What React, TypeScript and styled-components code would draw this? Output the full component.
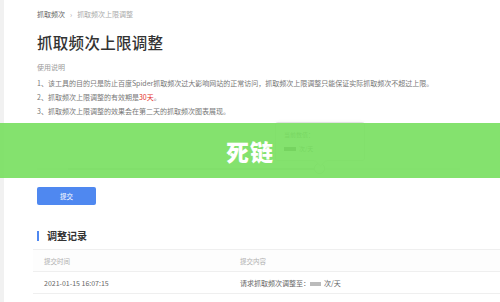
import React from "react";
import styled, { createGlobalStyle } from "styled-components";

const Global = createGlobalStyle`
  html, body { margin: 0; padding: 0; background: #f1f1f1; }
  body { font-family: "Noto Sans CJK SC", "Noto Sans", sans-serif; }
  #root { width: 500px; height: 302px; overflow: hidden; position: relative; }
`;

const Page = styled.div`
  margin-left: 4px;
  height: 302px;
  background: #ffffff;
  padding: 8px 0 0 33px;
  box-sizing: border-box;
  display: flex;
  flex-direction: column;
`;

const Crumbs = styled.div`
  display: flex;
  align-items: center;
  gap: 5px;
  font-size: 7px;
  line-height: 12px;
  color: #aaaaaa;
`;

const CrumbLink = styled.span`
  color: #666666;
`;

const Title = styled.h1`
  margin: 12px 0 0;
  font-size: 15.5px;
  line-height: 20px;
  font-weight: 500;
  color: #333333;
  letter-spacing: 0.3px;
`;

const Notes = styled.div`
  margin-top: 8px;
  display: flex;
  flex-direction: column;
  font-size: 7px;
  line-height: 14px;
  color: #777777;
`;

const NoteHead = styled.div`
  margin-bottom: 2px;
  color: #999999;
`;

const Red = styled.span`
  color: #e5312b;
`;

const SliderArea = styled.div`
  position: relative;
  height: 62px;
`;

const Track = styled.div`
  position: absolute;
  left: 0;
  right: 40px;
  top: 50px;
  height: 2px;
  background: #e8e8e8;
`;

const Fill = styled.div`
  position: absolute;
  left: 31px;
  top: 50px;
  height: 2px;
  background: #d8d8d8;
`;

const Knob = styled.div`
  position: absolute;
  left: 277px;
  top: 45px;
  width: 11px;
  height: 11px;
  border-radius: 50%;
  border: 1.5px solid #cfcfcf;
  background: #fff;
  box-sizing: border-box;
`;

const Tip = styled.div`
  position: absolute;
  left: 238px;
  top: 4px;
  width: 90px;
  height: 39px;
  border: 1px solid #e2e2e2;
  border-radius: 3px;
  background: #fff;
  box-shadow: 0 1px 4px rgba(0,0,0,0.08);
  box-sizing: border-box;
  padding: 5px 0 0 8px;
  font-size: 6px;
  line-height: 14px;
  color: #666;
  &::after {
    content: "";
    position: absolute;
    left: 40px;
    bottom: -5px;
    width: 8px;
    height: 8px;
    background: #fff;
    border-right: 1px solid #e2e2e2;
    border-bottom: 1px solid #e2e2e2;
    transform: rotate(45deg);
  }
`;

const Redact = styled.span<{ $w: number; $c: string }>`
  display: inline-block;
  width: ${(p) => p.$w}px;
  height: 4px;
  background: ${(p) => p.$c};
  vertical-align: middle;
  margin-right: 3px;
`;

const SubmitButton = styled.button`
  margin-top: 7px;
  width: 59px;
  height: 18px;
  border: none;
  border-radius: 2px;
  background: #4f88f0;
  color: #ffffff;
  font-family: inherit;
  font-size: 6.5px;
  padding: 0;
  align-self: flex-start;
`;

const SectionTitle = styled.div`
  margin-top: 24px;
  display: flex;
  align-items: center;
  gap: 8px;
  font-size: 10px;
  line-height: 14px;
  font-weight: 700;
  color: #333;
`;

const Bar = styled.span`
  width: 2px;
  height: 10px;
  background: #4f88f0;
`;

const Table = styled.div`
  margin-top: 6px;
  margin-left: -4px;
  display: flex;
  flex-direction: column;
`;

const Row = styled.div<{ $head?: boolean }>`
  display: grid;
  grid-template-columns: 196px 1fr;
  height: 21px;
  align-items: center;
  padding-left: 11px;
  border-top: 1px solid #efefef;
  font-size: ${(p) => (p.$head ? "6.5px" : "7px")};
  color: ${(p) => (p.$head ? "#b0b0b0" : "#666")};
  background: ${(p) => (p.$head ? "#fdfdfd" : "#fff")};
  &:last-child { border-bottom: 1px solid #efefef; }
`;

const Band = styled.div`
  position: absolute;
  left: 0;
  right: 0;
  top: 123px;
  height: 55px;
  background: rgba(122, 223, 98, 0.92);
  display: flex;
  align-items: center;
  justify-content: center;
  color: #ffffff;
  font-size: 23px;
  font-weight: 900;
  letter-spacing: 1px;
`;

export default function App() {
  return (
    <>
      <Global />
      <Page>
        <Crumbs>
          <CrumbLink>抓取频次</CrumbLink>
          <span>›</span>
          <span>抓取频次上限调整</span>
        </Crumbs>
        <Title>抓取频次上限调整</Title>
        <Notes>
          <NoteHead>使用说明</NoteHead>
          <div>1、该工具的目的只是防止百度Spider抓取频次过大影响网站的正常访问，抓取频次上限调整只能保证实际抓取频次不超过上限。</div>
          <div>2、抓取频次上限调整的有效期是<Red>30天</Red>。</div>
          <div>3、抓取频次上限调整的效果会在第二天的抓取频次图表展现。</div>
        </Notes>
        <SliderArea>
          <Track />
          <Fill style={{ width: "246px" }} />
          <Knob />
          <Tip>
            <div>当前数值：</div>
            <div><Redact $w={12} $c="#555" />次/天</div>
          </Tip>
        </SliderArea>
        <SubmitButton>提交</SubmitButton>
        <SectionTitle>
          <Bar />
          调整记录
        </SectionTitle>
        <Table>
          <Row $head>
            <span>提交时间</span>
            <span>提交内容</span>
          </Row>
          <Row>
            <span>2021-01-15 16:07:15</span>
            <span>请求抓取频次调整至：<Redact $w={11} $c="#bbb" />次/天</span>
          </Row>
        </Table>
      </Page>
      <Band>死链</Band>
    </>
  );
}
